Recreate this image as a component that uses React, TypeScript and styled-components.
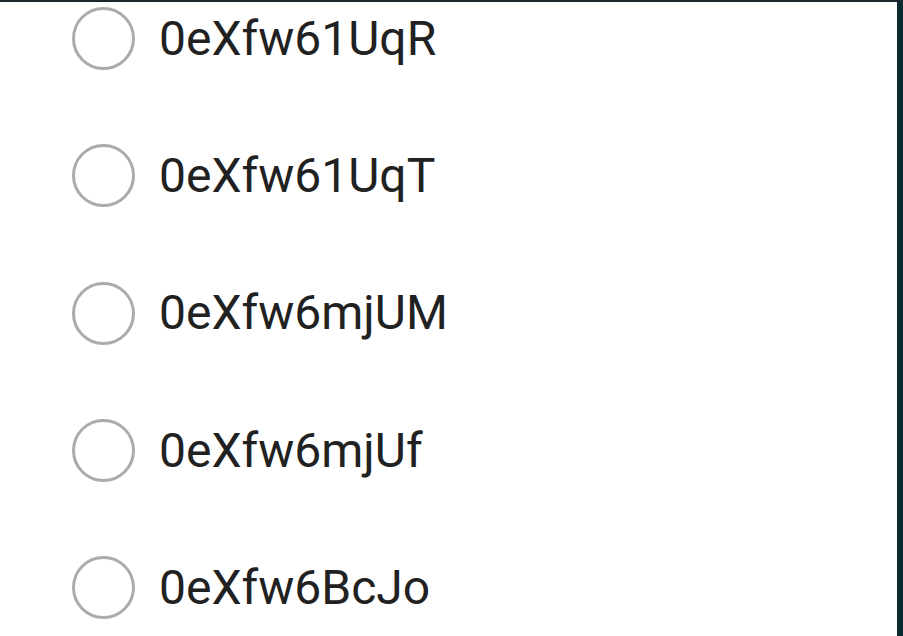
import React from "react";
import styled, { createGlobalStyle } from "styled-components";

const Global = createGlobalStyle`
  html, body {
    margin: 0;
    padding: 0;
    width: 903px;
    height: 636px;
    overflow: hidden;
    background: #0c2a30;
  }
`;

const Screen = styled.div`
  width: 903px;
  height: 636px;
  display: flex;
  flex-direction: column;
  background: #0c2a30;
  border-top: 2px solid #1b272a;
  box-sizing: border-box;
  overflow: hidden;
`;

const Dialog = styled.div`
  width: 897px;
  flex: 1;
  background: #ffffff;
  overflow: hidden;
`;

const List = styled.ul`
  list-style: none;
  margin: -32px 0 0;
  padding: 0;
`;

const Row = styled.li`
  height: 137.3px;
  display: flex;
  align-items: center;
  padding-left: 72px;
  gap: 24px;
  font-family: Roboto, "Noto Sans", sans-serif;
  font-size: 48px;
  color: #212121;
`;

const Radio = styled.span`
  width: 63px;
  height: 63px;
  box-sizing: border-box;
  border-radius: 50%;
  border: 3px solid #ababab;
  flex: none;
`;

const Label = styled.span`
  line-height: 1;
`;

const items = ["0eXfw61UqR", "0eXfw61UqT", "0eXfw6mjUM", "0eXfw6mjUf", "0eXfw6BcJo"];

export default function App() {
  return (
    <>
      <Global />
      <Screen>
        <Dialog>
          <List>
            {items.map((t) => (
              <Row key={t}>
                <Radio />
                <Label>{t}</Label>
              </Row>
            ))}
          </List>
        </Dialog>
      </Screen>
    </>
  );
}
